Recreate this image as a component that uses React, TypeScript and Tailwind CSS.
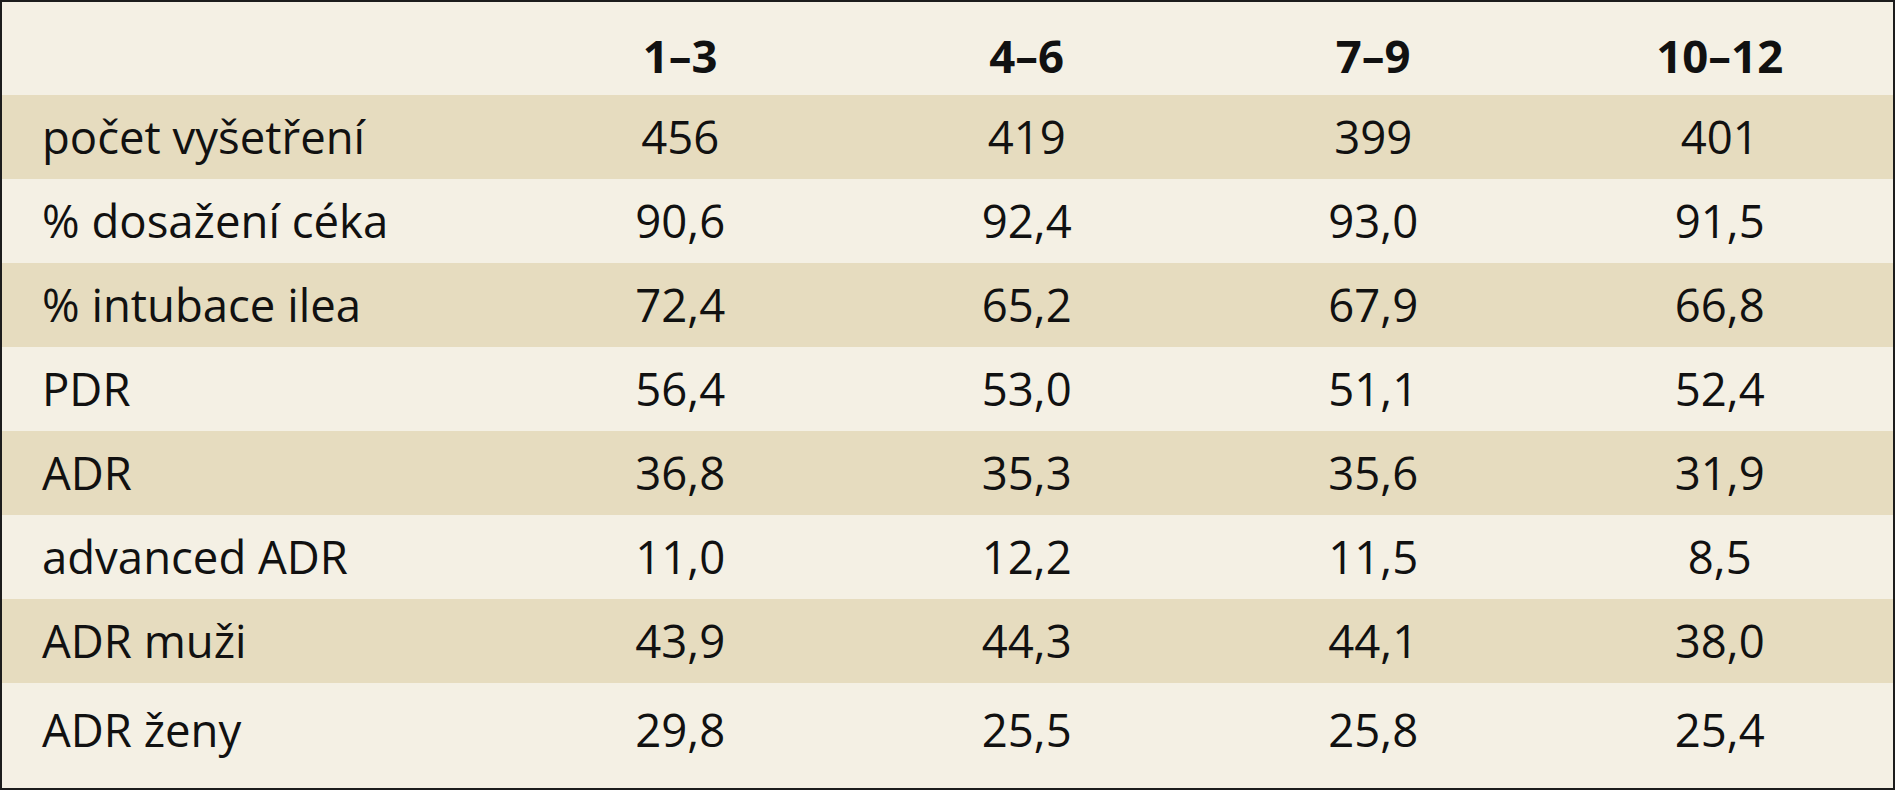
const cols = ["1–3", "4–6", "7–9", "10–12"];

const rows: [string, string[]][] = [
  ["počet vyšetření", ["456", "419", "399", "401"]],
  ["% dosažení céka", ["90,6", "92,4", "93,0", "91,5"]],
  ["% intubace ilea", ["72,4", "65,2", "67,9", "66,8"]],
  ["PDR", ["56,4", "53,0", "51,1", "52,4"]],
  ["ADR", ["36,8", "35,3", "35,6", "31,9"]],
  ["advanced ADR", ["11,0", "12,2", "11,5", "8,5"]],
  ["ADR muži", ["43,9", "44,3", "44,1", "38,0"]],
  ["ADR ženy", ["29,8", "25,5", "25,8", "25,4"]],
];

export default function App() {
  return (
    <main className="w-[1895px] h-[800px] bg-white font-['Open_Sans',sans-serif] text-[45.5px] leading-none text-[#111]">
      <div className="w-[1895px] border-2 border-[#1c1c1c] bg-[#f4f0e4]">
        {/* header */}
        <div className="grid grid-cols-[505px_repeat(4,1fr)] h-[93px] pt-[31px] font-bold">
          <div />
          {cols.map((c) => (
            <div key={c} className="text-center">{c}</div>
          ))}
        </div>
        {/* body rows */}
        {rows.map(([label, vals], i) => {
          const last = i === rows.length - 1;
          return (
            <div
              key={label}
              className={
                "grid grid-cols-[505px_repeat(4,1fr)] " +
                (i % 2 === 0 ? "bg-[#e6dcbf] " : "") +
                (last ? "h-[105px] items-start pt-[24px]" : "h-[84px] items-center")
              }
            >
              <div className="pl-[40px]">{label}</div>
              {vals.map((v, j) => (
                <div key={j} className="text-center">{v}</div>
              ))}
            </div>
          );
        })}
      </div>
    </main>
  );
}
